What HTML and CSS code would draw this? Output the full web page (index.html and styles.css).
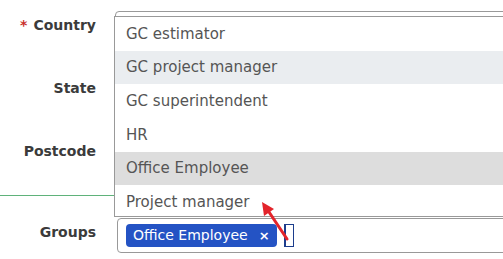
FILE: index.html
```html
<!DOCTYPE html>
<html lang="en">
<head>
    <meta charset="UTF-8">
    <meta name="viewport" content="width=device-width, initial-scale=1.0">
    <title>User form</title>
    <link rel="stylesheet" href="styles.css">
</head>
<body>
    <form class="user-form">
        <div class="form-row">
            <label class="form-label"><span class="required">*</span>Country</label>
            <div class="field">
                <div class="select-box"></div>
                <ul class="dropdown">
                    <li class="option">GC estimator</li>
                    <li class="option hovered">GC project manager</li>
                    <li class="option">GC superintendent</li>
                    <li class="option">HR</li>
                    <li class="option selected">Office Employee</li>
                    <li class="option">Project manager</li>
                </ul>
            </div>
        </div>

        <div class="form-row">
            <label class="form-label">State</label>
            <div class="field">
                <div class="text-box"></div>
            </div>
        </div>

        <div class="form-row">
            <label class="form-label">Postcode</label>
            <div class="field">
                <div class="text-box"></div>
            </div>
        </div>

        <hr class="divider">

        <div class="form-row last">
            <label class="form-label">Groups</label>
            <div class="field">
                <div class="multi-box">
                    <span class="tag">Office Employee <span class="tag-remove">×</span></span>
                    <span class="search-input"></span>
                </div>
                <svg class="arrow" width="60" height="60" viewBox="0 0 60 60">
                    <line x1="52" y1="43" x2="32" y2="13" stroke="#e3242b" stroke-width="3" stroke-linecap="round"/>
                    <polygon points="27,6 39,13 29,20" fill="#e3242b"/>
                </svg>
            </div>
        </div>
    </form>
</body>
</html>
```

FILE: styles.css
```css
* {
    margin: 0;
    padding: 0;
    box-sizing: border-box;
}

body {
    font-family: 'DejaVu Sans', sans-serif;
    background: #fff;
    width: 503px;
    height: 259px;
    overflow: hidden;
}

.user-form {
    width: 560px;
    padding-top: 11px;
}

.form-row {
    display: grid;
    grid-template-columns: 96px 1fr;
    column-gap: 19px;
    align-items: start;
    margin-bottom: 29px;
}

.form-row.last {
    margin-bottom: 0;
}

.form-label {
    font-size: 14px;
    font-weight: bold;
    color: #3b3b3b;
    line-height: 20px;
    padding-top: 4px;
    text-align: right;
}

.required {
    color: #c9302c;
    margin-right: 6px;
}

.field {
    position: relative;
}

.select-box,
.text-box {
    height: 34px;
    border: 1px solid #999;
    border-radius: 4px;
}

.dropdown {
    position: absolute;
    top: 5px;
    left: -1px;
    right: -20px;
    height: 201px;
    overflow: hidden;
    list-style: none;
    background: #fff;
    border: 1px solid #999;
    z-index: 10;
}

.option {
    height: 33.67px;
    display: flex;
    align-items: center;
    padding-left: 11px;
    font-size: 15px;
    color: #555;
}

.option.hovered {
    background: #eaedf0;
}

.option.selected {
    background: #dddddd;
}

.divider {
    border: none;
    border-top: 1px solid #5fb27a;
    margin: -5px 0 22px;
}

.multi-box {
    margin-left: 2px;
    height: 35px;
    border: 1px solid #999;
    border-radius: 4px;
    display: flex;
    align-items: center;
    padding-left: 8px;
}

.tag {
    background: #2453c4;
    color: #fff;
    font-size: 14px;
    height: 23px;
    line-height: 23px;
    border-radius: 4px;
    padding: 0 7px 0 7px;
    display: inline-flex;
    align-items: center;
}

.tag-remove {
    font-size: 13px;
    font-weight: bold;
    margin-left: 11px;
}

.search-input {
    width: 10px;
    height: 23px;
    margin-left: 7px;
    border: 1px solid #1c3d8c;
    border-left-width: 2px;
}

.arrow {
    position: absolute;
    left: 120px;
    top: -22px;
    z-index: 20;
}
```
